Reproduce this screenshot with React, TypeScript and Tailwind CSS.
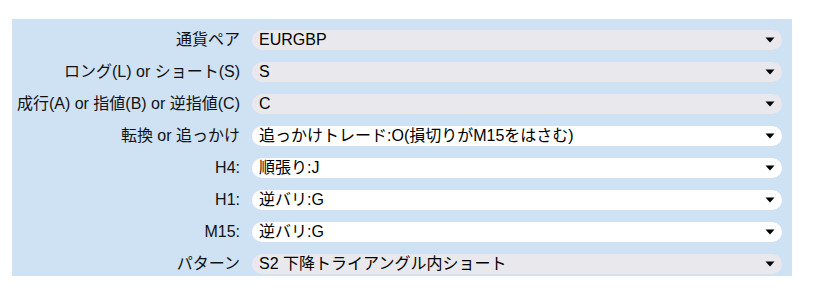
import React from "react";

const rows: { label: string; value: string; white?: boolean }[] = [
  { label: "通貨ペア", value: "EURGBP" },
  { label: "ロング(L) or ショート(S)", value: "S" },
  { label: "成行(A) or 指値(B) or 逆指値(C)", value: "C" },
  { label: "転換 or 追っかけ", value: "追っかけトレード:O(損切りがM15をはさむ)", white: true },
  { label: "H4:", value: "順張り:J", white: true },
  { label: "H1:", value: "逆バリ:G", white: true },
  { label: "M15:", value: "逆バリ:G", white: true },
  { label: "パターン", value: "S2 下降トライアングル内ショート" },
];

export default function App() {
  return (
    <div
      className="w-[826px] h-[290px] bg-white pt-[19px] pl-[12px] text-[16px] leading-[20px] text-black"
      style={{ fontFamily: '"Liberation Sans", Arial, "Noto Sans CJK JP", sans-serif' }}
    >
      <div className="w-[780px] bg-[#cfe2f3] pt-[11px] pb-[2px] grid grid-cols-[228px_530px] gap-x-[12px] gap-y-[12px]">
        {rows.map((r) => (
          <React.Fragment key={r.label}>
            <div className="text-right h-[20px] whitespace-nowrap text-[#111]">{r.label}</div>
            <div
              className={
                "h-[20px] rounded-[10px] flex items-center justify-between pl-[7px] pr-[7px] " +
                (r.white ? "bg-white" : "bg-[#e9e9ed]")
              }
            >
              <span className="whitespace-nowrap">{r.value}</span>
              <svg width="10" height="6" viewBox="0 0 10 6" className="shrink-0">
                <path d="M0.5 0.5 L9.5 0.5 L5 5.5 Z" fill="#000" />
              </svg>
            </div>
          </React.Fragment>
        ))}
      </div>
    </div>
  );
}
